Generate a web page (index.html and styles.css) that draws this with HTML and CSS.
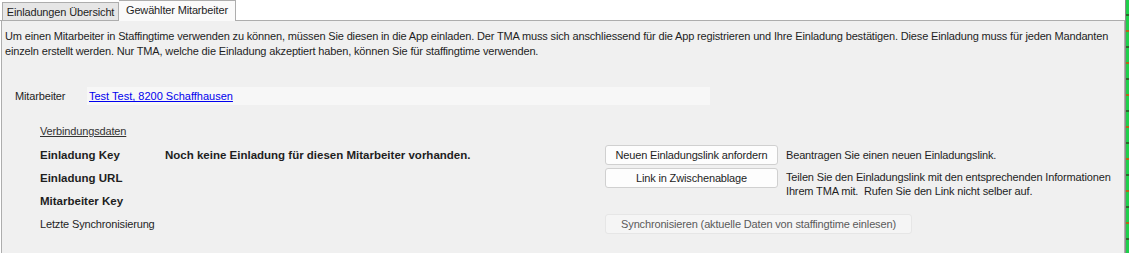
FILE: index.html
```html
<!DOCTYPE html>
<html lang="de">
<head>
    <meta charset="UTF-8">
    <meta name="viewport" content="width=device-width, initial-scale=1.0">
    <link rel="stylesheet" href="styles.css">
</head>
<body>
    <div class="window">
        <div class="main">
            <div class="tabs">
                <div class="tab">Einladungen Übersicht</div>
                <div class="tab active">Gewählter Mitarbeiter</div>
            </div>
            <div class="panel">
                <p class="intro">Um einen Mitarbeiter in Staffingtime verwenden zu können, müssen Sie diesen in die App einladen. Der TMA muss sich anschliessend für die App registrieren und Ihre Einladung bestätigen. Diese Einladung muss für jeden Mandanten einzeln erstellt werden. Nur TMA, welche die Einladung akzeptiert haben, können Sie für staffingtime verwenden.</p>

                <div class="employee">
                    <span class="employee-label">Mitarbeiter</span>
                    <div class="employee-field"><a href="#">Test Test, 8200 Schaffhausen</a></div>
                </div>

                <div class="connection">
                    <div class="section-title">Verbindungsdaten</div>
                    <div class="grid">
                        <div class="key">Einladung Key</div>
                        <div class="value">Noch keine Einladung für diesen Mitarbeiter vorhanden.</div>
                        <div class="cell"><button class="btn">Neuen Einladungslink anfordern</button></div>
                        <div class="desc">Beantragen Sie einen neuen Einladungslink.</div>

                        <div class="key">Einladung URL</div>
                        <div class="value"></div>
                        <div class="cell"><button class="btn">Link in Zwischenablage</button></div>
                        <div class="desc desc-long">Teilen Sie den Einladungslink mit den entsprechenden Informationen<br>Ihrem TMA mit.&nbsp; Rufen Sie den Link nicht selber auf.</div>

                        <div class="key">Mitarbeiter Key</div>
                        <div class="value"></div>
                        <div class="cell"></div>

                        <div class="key plain">Letzte Synchronisierung</div>
                        <div class="value"></div>
                        <div class="cell wide"><button class="btn disabled">Synchronisieren (aktuelle Daten von staffingtime einlesen)</button></div>
                    </div>
                </div>
            </div>
        </div>
        <div class="sidebar"></div>
    </div>
</body>
</html>
```

FILE: styles.css
```css
html, body {
    margin: 0;
    padding: 0;
    background-color: #ffffff;
    font-family: "Liberation Sans", Arial, sans-serif;
    font-size: 11px;
    letter-spacing: -0.15px;
    color: #1e1e1e;
}
.window {
    display: flex;
    height: 253px;
}
.main {
    flex: 1;
    display: flex;
    flex-direction: column;
}
.sidebar {
    width: 3px;
    background: repeating-linear-gradient(#1fd04b 0 14px, #2a6b2a 14px 16px, #1fd04b 16px 30px, #b06a14 30px 32px);
    border-left: 1px solid #8a8a8a;
}
.tabs {
    display: flex;
    height: 21px;
    padding-left: 2px;
    align-items: flex-end;
    border-bottom: 1px solid #adadad;
    box-sizing: border-box;
}
.tab {
    width: 117px;
    height: 18px;
    line-height: 18px;
    text-align: center;
    background-color: #e6e6e6;
    border: 1px solid #adadad;
    border-bottom: none;
    box-sizing: border-box;
    color: #1e1e1e;
}
.tab.active {
    height: 21px;
    line-height: 19px;
    background-color: #fafafa;
    border-left: none;
    margin-bottom: -1px;
}
.panel {
    flex: 1;
    background-color: #f0f0f0;
    border-left: 1px solid #adadad;
    border-right: 1px solid #adadad;
    margin-left: 1px;
}
.intro {
    margin: 8px 12px 0 3px;
    line-height: 15px;
}
.employee {
    display: flex;
    align-items: center;
    margin-top: 28px;
    height: 18px;
}
.employee-label {
    width: 72px;
    padding-left: 13px;
}
.employee-field {
    width: 621px;
    height: 18px;
    line-height: 18px;
    padding-left: 2px;
    background-color: #f7f7f7;
}
.employee-field a {
    color: #0000ee;
    letter-spacing: 0;
}
.connection {
    padding-left: 38px;
    margin-top: 19px;
}
.section-title {
    text-decoration: underline;
    color: #333333;
    line-height: 14px;
}
.grid {
    display: grid;
    grid-template-columns: 125px 440px 181px 1fr;
    grid-auto-rows: 23px;
    margin-top: 5px;
}
.key {
    font-size: 11.5px;
    font-weight: bold;
    letter-spacing: 0;
    align-self: center;
}
.key.plain {
    font-size: 11px;
    font-weight: normal;
    letter-spacing: -0.15px;
    white-space: nowrap;
}
.value {
    font-size: 11.5px;
    font-weight: bold;
    letter-spacing: 0;
    align-self: center;
}
.cell {
    display: flex;
    align-items: center;
}
.cell.wide {
    grid-column: 3 / span 2;
}
.desc {
    align-self: center;
}
.desc-long {
    grid-row: span 2;
    align-self: start;
    margin-top: 4px;
    line-height: 14px;
}
.btn {
    width: 173px;
    height: 20px;
    padding: 0;
    font-family: inherit;
    font-size: 11px;
    letter-spacing: -0.15px;
    color: #1e1e1e;
    background-color: #fdfdfd;
    border: 1px solid #d0d0d0;
    border-radius: 3px;
}
.btn.disabled {
    width: 307px;
    color: #5a5a5a;
    background-color: #f5f5f5;
    border-color: #e6e6e6;
}
```
